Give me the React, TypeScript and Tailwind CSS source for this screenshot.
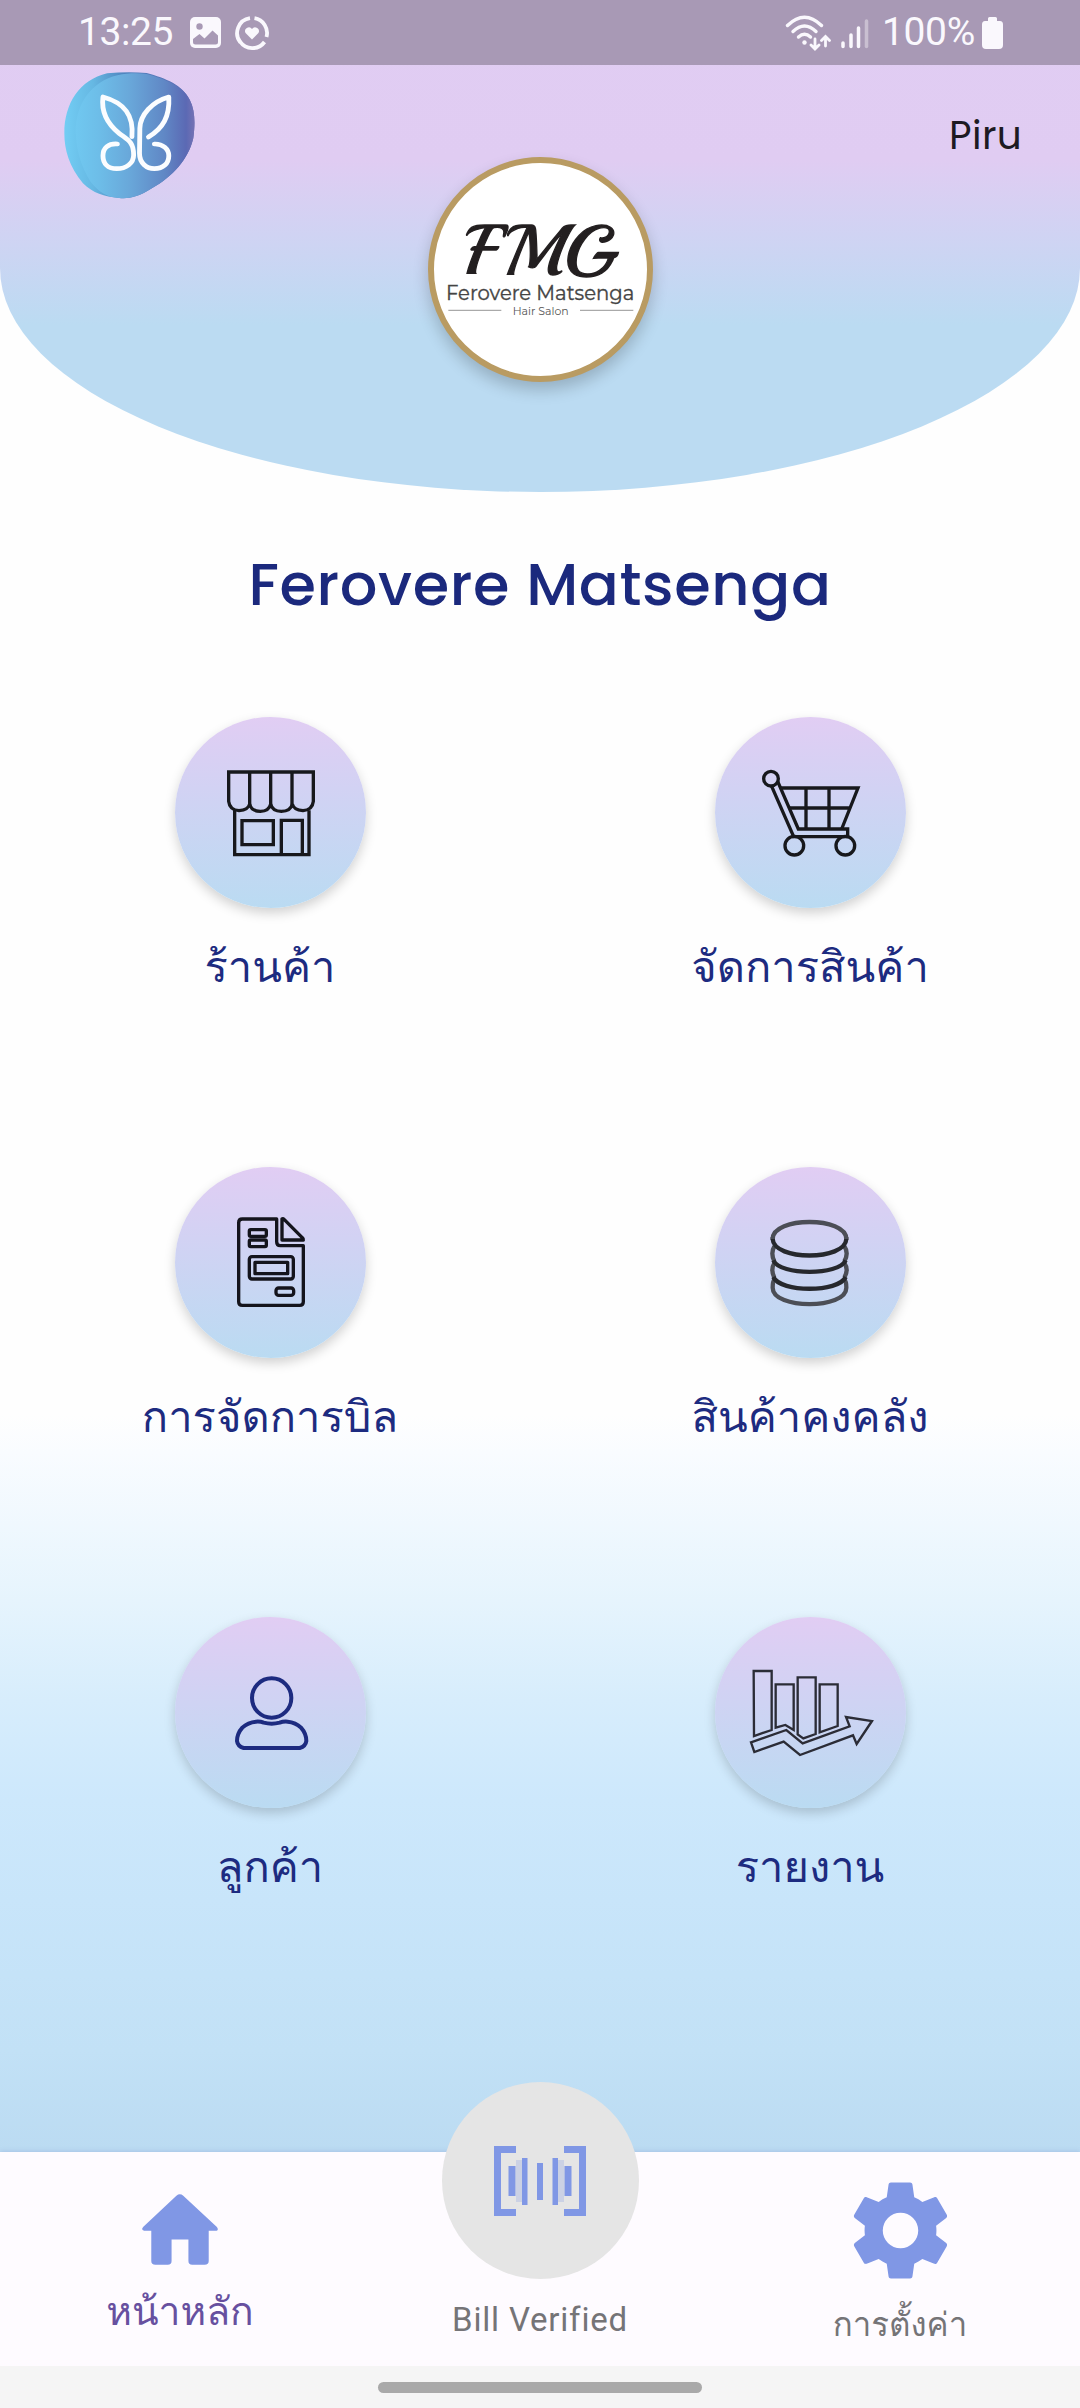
import type { ReactNode } from "react";

const thai = "font-['Loma','Noto_Sans',sans-serif]";

function StatusBar() {
  return (
    <div className="flex h-[65px] shrink-0 items-center bg-[#a899b5] pl-[78px] pr-[77px] font-['Roboto',sans-serif] text-[#faf8fd]">
      <span className="w-[96px] text-[39px] leading-none tracking-[-0.4px]">13:25</span>
      <svg className="ml-[16px]" width="31" height="31" viewBox="0 0 31 31">
        <rect width="31" height="31" rx="5" fill="#faf8fd" />
        <circle cx="9.5" cy="9.5" r="3.2" fill="#a899b5" />
        <path d="M3 22 9.500 17l5 4.500L22.500 13.500 28 18.500V25q0 2.500-2.500 2.500H5.500q-2.500 0-2.500-2.500Z" fill="#a899b5" />
      </svg>
      <svg className="ml-[14px]" width="34" height="34" viewBox="0 0 34 34">
        <g fill="none" stroke="#faf8fd" strokeWidth="3.800">
          <path d="M15 2.200A15 15 0 0 0 5.500 26.500" />
          <path d="M19.500 2.200A15 15 0 0 1 31.500 21" />
          <path d="M5 25.500A15 15 0 0 0 29.500 26" />
        </g>
        <path d="M17 23.500 10.800 17.300a3.700 3.700 0 0 1 6.200-4.200 3.700 3.700 0 0 1 6.200 4.200Z" fill="#faf8fd" />
      </svg>
      <div className="ml-auto flex items-center">
        <svg width="46" height="36" viewBox="0 0 46 36" fill="none" stroke="#faf8fd" strokeWidth="3.400" strokeLinecap="round">
          <path d="M2.500 10.500Q19.500-6 36.500 10.500" />
          <path d="M8 16.500Q19.500 5.500 31 16.500" />
          <path d="M13.500 22Q19.500 16.500 25.500 22" />
          <circle cx="19.500" cy="27.500" r="2.200" fill="#faf8fd" stroke="none" />
          <g strokeWidth="2.800">
            <path d="M30 24v9M26 30l4 4 4-4M40.500 31v-9M36.500 25.500l4-4 4 4" />
          </g>
        </svg>
        <svg className="ml-[9px]" width="30" height="32" viewBox="0 0 30 32" fill="none" stroke="#faf8fd" strokeWidth="3.500" strokeLinecap="round">
          <path d="M3 26v3.500M11 18v11.500M18.500 11v18.500" />
          <path d="M26.500 4v25.500" opacity=".4" />
        </svg>
        <span className="ml-[12px] text-[39px] leading-none tracking-[-0.3px]">100%</span>
        <svg className="ml-[7px]" width="21" height="32" viewBox="0 0 21 32" fill="#faf8fd">
          <path d="M7.500 0h6Q15 0 15 1.500V4h3Q21 4 21 7.500V28q0 4-4 4H4q-4 0-4-4V7.500Q0 4 3 4h3V1.500Q6 0 7.500 0Z" />
        </svg>
      </div>
    </div>
  );
}

function ButterflyLogo() {
  return (
    <svg width="131" height="127" viewBox="185 216 380 381" preserveAspectRatio="none">
      <defs>
        <linearGradient id="wing" x1="0" x2="1" y1="0" y2="0">
          <stop offset="0" stopColor="#70c8f0" />
          <stop offset=".2" stopColor="#6dbde8" />
          <stop offset=".45" stopColor="#69a8da" />
          <stop offset=".75" stopColor="#6087c5" />
          <stop offset=".93" stopColor="#5b69b4" />
          <stop offset="1" stopColor="#7572b4" />
        </linearGradient>
        <linearGradient id="rim" x1="0" x2="1" y1="0" y2="0">
          <stop offset="0" stopColor="#72cdf4" />
          <stop offset=".22" stopColor="#66b8e3" />
          <stop offset=".45" stopColor="#4f86c0" />
          <stop offset="1" stopColor="#5e68b2" />
        </linearGradient>
      </defs>
      <path fill="url(#rim)" d="M310 220C350 216 390 216 425 219C480 235 530 255 550 300C565 330 566 370 560 415C545 480 500 530 440 565C400 592 370 597 345 594C300 590 270 580 240 550C200 500 186 450 186 400C186 310 230 240 310 220Z" />
      <path fill="url(#wing)" d="M340 226C370 219 400 219 425 222C480 238 530 258 550 300C565 330 566 370 560 415C545 480 500 530 440 565C400 592 370 597 345 594C310 592 285 575 262 545C235 500 220 450 219 395C219 310 265 245 340 226Z" />
      <g fill="none" stroke="#fbfdff" strokeWidth="14" strokeLinecap="round" strokeLinejoin="round">
        <path d="M382 410C388 345 360 308 298 291C292 340 315 375 345 400C370 420 387 425 387 465C387 490 365 506 338 506C312 506 298 490 298 467C298 445 313 430 340 432" />
        <path d="M430 411C472 385 492 350 489 291C440 305 406 345 405 385L404 460C404 490 425 506 447 506C473 506 489 490 489 467C489 447 472 431 447 432" />
      </g>
    </svg>
  );
}

function SalonLogo() {
  return (
    <div className="size-[225px] overflow-hidden rounded-full border-[6px] border-[#b99b62] bg-white shadow-[0_8px_16px_rgba(0,0,0,0.2)]">
      <svg width="213" height="213" viewBox="100 70 639 639">
        <text x="195" y="404" fontFamily="Playball, cursive" fontSize="211" textLength="448" lengthAdjust="spacingAndGlyphs" fill="#231f20" stroke="#231f20" strokeWidth="4">FMG</text>
        <text x="136" y="481" fontFamily="Montserrat, Inter, sans-serif" fontSize="59" textLength="565" lengthAdjust="spacingAndGlyphs" fill="#444" stroke="#444" strokeWidth="1">Ferovere Matsenga</text>
        <text x="336" y="527" fontFamily="Montserrat, Inter, sans-serif" fontSize="33" textLength="168" lengthAdjust="spacingAndGlyphs" fill="#555">Hair Salon</text>
        <path d="M143 512H302M538 512H698" stroke="#aaa" strokeWidth="4" />
      </svg>
    </div>
  );
}

function Header() {
  return (
    <header className="flex h-[492px] shrink-0 flex-col overflow-hidden rounded-b-[50%_224px] bg-[linear-gradient(to_bottom,#e1cdf3_0px,#e0ccf2_160px,#ced4f3_244px,#bbdbf2_325px,#bbdbf2_492px)]">
      <StatusBar />
      <div className="grid grid-cols-[1fr_auto_1fr] items-start">
        <div className="pl-[64px] pt-[7px]">
          <ButterflyLogo />
        </div>
        <div className="pt-[92px]">
          <SalonLogo />
        </div>
        <span className="pr-[58px] pt-[47px] text-right font-['Poppins','Inter',sans-serif] text-[39px] leading-[48px] tracking-[0.300px] text-[#1d1a22]">Piru</span>
      </div>
    </header>
  );
}

function StoreIcon() {
  return (
    <svg className="size-full" viewBox="43 52 573 573" fill="none" stroke="#17181c" strokeWidth="10">
      <path d="M204 217H458V305Q455 331 427 333Q399 331 395 313Q390 335 362 335Q335 335 330 313Q325 335 299 335Q272 335 267 313Q263 331 235 333Q207 331 204 305Z" />
      <path d="M267 217V315M330 217V315M394 217V315M222 332V465H445V332" />
      <path d="M244 363H338V435H244ZM362 465V362H425V465" />
    </svg>
  );
}

function CartIcon() {
  return (
    <svg className="size-full" viewBox="134 52 573 573" fill="none" stroke="#17181c" strokeWidth="10">
      <circle cx="302" cy="237" r="22" />
      <circle cx="372" cy="438" r="28" />
      <circle cx="525" cy="438" r="28" />
      <path d="M322 245 384 388H532V411H370L304 260" />
      <path d="M330 265H563L514 388M357 325H538M407 265V388M476 265V388" />
    </svg>
  );
}

function BillIcon() {
  return (
    <svg className="size-full" viewBox="164 52 573 573" fill="none" stroke="#14141c" strokeWidth="10" strokeLinejoin="round">
      <path d="M469 208H366Q355 208 355 219V456Q355 467 366 467H538Q549 467 549 456V288H480Q469 288 469 276Z" />
      <path d="M485 208V271H549Q550 267 545 263L492 210Q488 206 485 208Z" />
      <rect x="387" y="240" width="51" height="20" rx="4" />
      <rect x="387" y="271" width="51" height="20" rx="4" />
      <rect x="387" y="321" width="132" height="67" rx="8" />
      <rect x="404" y="338" width="98" height="34" />
      <rect x="467" y="415" width="53" height="22" rx="8" />
    </svg>
  );
}

function CoinsIcon() {
  return (
    <svg className="size-full" viewBox="134 52 573 573" fill="none" strokeWidth="13">
      <g stroke="#4c4e56">
        <path d="M307 268C307 200 528 200 528 268" />
        <path d="M307 262V270M528 262V270M312 290Q300 310 312 335M522 290Q536 310 522 335M312 340Q300 360 312 384M522 340Q536 360 522 384" />
        <path d="M312 390Q307 395 307 414C307 480 528 480 528 414Q528 395 522 390" />
      </g>
      <g stroke="#26282d">
        <path d="M307 268C310 334 525 334 528 268" />
        <path d="M309 332C330 378 505 378 526 332M309 382C330 429 505 429 526 382" />
      </g>
    </svg>
  );
}

function CustomerIcon() {
  return (
    <svg className="size-full" viewBox="43 52 573 573" fill="none" stroke="#1d2b80" strokeWidth="12" strokeLinejoin="round">
      <circle cx="333" cy="295" r="59" />
      <path d="M286 366Q299 365 309 369Q333 375 357 369Q367 365 381 366Q405 368 421 384Q437 402 437 424Q435 440 417 445H249Q231 440 229 424Q229 402 245 384Q262 368 286 366Z" />
    </svg>
  );
}

function ReportIcon() {
  return (
    <svg className="size-full" viewBox="73 52 573 573" fill="none" stroke="#2b2c36" strokeWidth="7">
      <path d="M189 214H243V391L190 409Z" />
      <path d="M255 254H309V391L284 376L255 384Z" />
      <path d="M321 233H375V403L338 416L321 404Z" />
      <path d="M387 254H441V379L387 398Z" />
      <path d="M181 428 287 391 336 431 477 380 466 352 544 364 498 433 487 407 328 466 279 426 191 457Z" />
    </svg>
  );
}

const items: { label: string; icon: ReactNode }[] = [
  { label: "ร้านค้า", icon: <StoreIcon /> },
  { label: "จัดการสินค้า", icon: <CartIcon /> },
  { label: "การจัดการบิล", icon: <BillIcon /> },
  { label: "สินค้าคงคลัง", icon: <CoinsIcon /> },
  { label: "ลูกค้า", icon: <CustomerIcon /> },
  { label: "รายงาน", icon: <ReportIcon /> },
];

function MenuItem({ label, icon }: { label: string; icon: ReactNode }) {
  return (
    <div className="flex h-[450px] flex-col items-center">
      <div className="size-[191px] rounded-full bg-[linear-gradient(to_bottom,#e1cdf3,#cfd3f3_45%,#badbf2)] shadow-[0_5px_12px_rgba(0,0,0,0.18)]">{icon}</div>
      <span className={`mt-[27px] whitespace-nowrap text-[43.500px] leading-[64px] text-[#1d2b80] ${thai}`}>{label}</span>
    </div>
  );
}

function HomeGlyph() {
  return (
    <svg width="76" height="71" viewBox="412 404 221 208" preserveAspectRatio="none" fill="#8097e5">
      <path d="M512 409Q522 401 532 409L629 500Q636 508 629 512H606V600Q606 611 594 611H558Q547 611 547 600V537H498V600Q498 611 487 611H451Q439 611 439 600V512H418Q408 508 416 500Z" />
    </svg>
  );
}

function GearGlyph() {
  return (
    <svg width="115" height="115" viewBox="0 0 24 24" fill="#8097e5">
      <path fillRule="evenodd" d="M19.430 12.980c.04-.32.07-.64.07-.98s-.03-.66-.07-.98l2.110-1.650c.19-.15.24-.42.12-.64l-2-3.460c-.12-.22-.39-.3-.61-.22l-2.490 1c-.52-.4-1.080-.73-1.690-.98l-.38-2.650C14.460 2.180 14.250 2 14 2h-4c-.25 0-.46.18-.49.42l-.38 2.650c-.61.25-1.170.59-1.690.98l-2.490-1c-.23-.09-.49 0-.61.22l-2 3.460c-.13.22-.07.49.12.64l2.110 1.650c-.04.32-.07.65-.07.98s.03.66.07.98l-2.110 1.650c-.19.15-.24.42-.12.64l2 3.460c.12.22.39.3.61.22l2.490-1c.52.4 1.080.73 1.690.98l.38 2.650c.03.24.24.42.49.42h4c.25 0 .46-.18.49-.42l.38-2.650c.61-.25 1.170-.59 1.690-.98l2.490 1c.23.09.49 0 .61-.22l2-3.460c.12-.22.07-.49-.12-.64l-2.110-1.650zM12 15.700a3.700 3.700 0 1 1 0-7.400 3.700 3.700 0 0 1 0 7.400z" />
    </svg>
  );
}

function ScanGlyph() {
  return (
    <svg width="92" height="70" viewBox="0 0 92 70" fill="#8097e5">
      <path d="M0 0H22V7H7V63H22V70H0ZM92 0H70V7H85V63H70V70H92Z" />
      <path opacity=".25" d="M22 14h6v42h-6ZM64 14h6v42h-6Z" />
      <path d="M14.500 20H21.500V50H14.500ZM28 12H33.500V59H28ZM43 17H49V54H43ZM58.500 12H64V59H58.500ZM70.500 20H77.500V50H70.500Z" />
    </svg>
  );
}

function BottomNav() {
  return (
    <nav className="grid h-[214px] shrink-0 grid-cols-3 bg-[#fefbff] shadow-[0_-1px_4px_rgba(110,130,200,0.25)]">
      <div className="flex flex-col items-center pt-[42px]">
        <HomeGlyph />
        <span className={`mt-[18px] whitespace-nowrap text-[39px] leading-[56px] text-[#67509f] ${thai}`}>หน้าหลัก</span>
      </div>
      <div className="flex flex-col items-center">
        <div className="-mt-[70px] flex size-[197px] shrink-0 items-center justify-center rounded-full bg-[#e5e5e5]">
          <ScanGlyph />
        </div>
        <span className="mt-[21px] whitespace-nowrap font-['Roboto',sans-serif] text-[33px] leading-[40px] tracking-[0.800px] text-[#757477]">Bill Verified</span>
      </div>
      <div className="flex flex-col items-center pt-[21px]">
        <GearGlyph />
        <span className={`mt-[12px] whitespace-nowrap text-[33px] leading-[50px] text-[#757477] ${thai}`}>การตั้งค่า</span>
      </div>
    </nav>
  );
}

export default function App() {
  return (
    <div className="flex h-[2408px] w-[1080px] flex-col overflow-hidden bg-[linear-gradient(to_bottom,#fefefe_0px,#fefefe_1415px,#f9fcff_1452px,#e6f4fd_1600px,#d7edfc_1700px,#cde8fc_1800px,#c8e5fa_1900px,#c2e1f6_2050px,#bbdbf2_2152px)]">
      <Header />
      <main className="flex h-[1660px] shrink-0 flex-col">
        <h1 className="pt-[57px] text-center font-['Poppins','Inter',sans-serif] text-[59px] font-medium leading-[72px] tracking-[0.650px] text-[#1b297d]">Ferovere Matsenga</h1>
        <div className="mt-[96px] grid grid-cols-2">
          {items.map((item) => (
            <MenuItem key={item.label} label={item.label} icon={item.icon} />
          ))}
        </div>
      </main>
      <BottomNav />
      <div className="flex h-[42px] shrink-0 justify-center bg-[#f5f5f5] pt-[16px]">
        <div className="h-[11px] w-[324px] rounded-full bg-[#a9a9a9]" />
      </div>
    </div>
  );
}
